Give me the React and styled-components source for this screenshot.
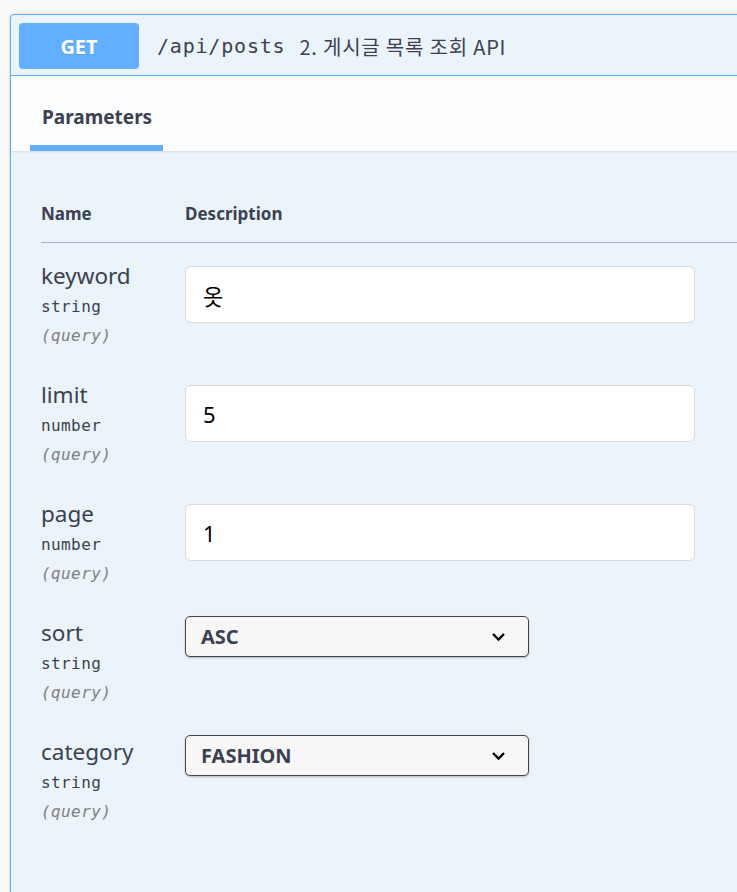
import React from "react";
import styled, { createGlobalStyle } from "styled-components";

const GlobalStyle = createGlobalStyle`
  html, body {
    margin: 0;
    background: #fafafa;
    overflow: hidden;
  }
  body {
    font-family: "Noto Sans", "Noto Sans CJK KR", sans-serif;
    color: #3b4151;
  }
`;

const Page = styled.div`
  padding: 14px 0 0 10px;
  height: 878px;
  overflow: hidden;
`;

const OpBlock = styled.div`
  width: 780px;
  min-height: 900px;
  background: #ebf3fb;
  border: 1px solid #61affe;
  border-radius: 4px;
  box-shadow: 0 0 3px rgba(0, 0, 0, 0.19);
`;

const Summary = styled.div`
  display: flex;
  align-items: center;
  padding: 8px 8px 6px;
  border-bottom: 1px solid #61affe;
`;

const Method = styled.span`
  display: flex;
  align-items: center;
  justify-content: center;
  width: 120px;
  height: 46px;
  border-radius: 4px;
  background: #61affe;
  color: #fff;
  font-size: 20px;
  font-weight: 700;
  text-shadow: 0 1px 0 rgba(0, 0, 0, 0.1);
`;

const Path = styled.span`
  margin-left: 18px;
  font-family: "DejaVu Sans Mono", monospace;
  font-size: 20px;
  letter-spacing: 0.8px;
  color: #3b4151;
`;

const Summ = styled.span`
  margin-left: 14px;
  font-family: "Noto Sans CJK KR", "Noto Sans", sans-serif;
  font-size: 20px;
  letter-spacing: 0.8px;
  color: #3b4151;
`;

const TabHeader = styled.div`
  display: flex;
  height: 75px;
  padding-left: 19px;
  background: rgba(255, 255, 255, 0.8);
  box-shadow: 0 1px 2px rgba(0, 0, 0, 0.1);
`;

const Tab = styled.div`
  display: flex;
  align-items: center;
  padding: 12px 11px 0 12px;
  border-bottom: 6px solid #61affe;
  font-size: 19px;
  font-weight: 700;
  color: #3b4151;
`;

const Table = styled.div`
  padding: 51px 0 0 30px;
`;

const HeadRow = styled.div`
  display: grid;
  grid-template-columns: 144px 1fr;
  padding-bottom: 16px;
  border-bottom: 1px solid #a7b3c2;
  font-size: 17px;
  font-weight: 700;
  line-height: 24px;
`;

const Rows = styled.div`
  display: flex;
  flex-direction: column;
  gap: 29px;
  padding-top: 17px;
`;

const Row = styled.div`
  display: grid;
  grid-template-columns: 144px 1fr;
  align-items: start;
`;

const NameCell = styled.div`
  display: flex;
  flex-direction: column;
`;

const ParamName = styled.div`
  font-size: 22.5px;
  line-height: 32px;
  color: #3b4151;
`;

const ParamType = styled.div`
  font-family: "DejaVu Sans Mono", monospace;
  font-size: 16px;
  letter-spacing: 0.4px;
  line-height: 29px;
  color: #3b4151;
`;

const ParamIn = styled.div`
  font-family: "DejaVu Sans Mono", monospace;
  font-size: 16px;
  font-style: italic;
  letter-spacing: 0.4px;
  line-height: 29px;
  color: #808080;
`;

const TextInput = styled.div`
  box-sizing: border-box;
  width: 510px;
  height: 57px;
  margin-top: 6px;
  display: flex;
  align-items: center;
  padding-left: 17px;
  background: #fff;
  border: 1px solid #d9d9d9;
  border-radius: 6px;
  font-family: "Noto Sans", "Noto Sans CJK KR", sans-serif;
  font-size: 22px;
  color: #000;
`;

const Select = styled.div`
  box-sizing: border-box;
  width: 344px;
  height: 41px;
  margin-top: -1px;
  display: flex;
  align-items: center;
  justify-content: space-between;
  padding: 0 22px 0 15px;
  background: #f7f7f7;
  border: 1.5px solid #41444e;
  border-radius: 5px;
  box-shadow: 0 1px 2px rgba(0, 0, 0, 0.25);
  font-size: 20px;
  font-weight: 700;
  color: #3b4151;
`;

const Chevron = () => (
  <svg width="15" height="10" viewBox="0 0 15 10">
    <path d="M2 2l5.5 5.5L13 2" fill="none" stroke="#000" strokeWidth="2.4" />
  </svg>
);

const params = [
  { name: "keyword", type: "string", value: "옷" },
  { name: "limit", type: "number", value: "5" },
  { name: "page", type: "number", value: "1" },
  { name: "sort", type: "string", value: "ASC", select: true },
  { name: "category", type: "string", value: "FASHION", select: true },
];

export default function App() {
  return (
    <>
      <GlobalStyle />
      <Page>
        <OpBlock>
          <Summary>
            <Method>GET</Method>
            <Path>/api/posts</Path>
            <Summ>2. 게시글 목록 조회 API</Summ>
          </Summary>
          <TabHeader>
            <Tab>Parameters</Tab>
          </TabHeader>
          <Table>
            <HeadRow>
              <div>Name</div>
              <div>Description</div>
            </HeadRow>
            <Rows>
              {params.map((p) => (
                <Row key={p.name}>
                  <NameCell>
                    <ParamName>{p.name}</ParamName>
                    <ParamType>{p.type}</ParamType>
                    <ParamIn>(query)</ParamIn>
                  </NameCell>
                  {p.select ? (
                    <Select>
                      {p.value}
                      <Chevron />
                    </Select>
                  ) : (
                    <TextInput>{p.value}</TextInput>
                  )}
                </Row>
              ))}
            </Rows>
          </Table>
        </OpBlock>
      </Page>
    </>
  );
}
